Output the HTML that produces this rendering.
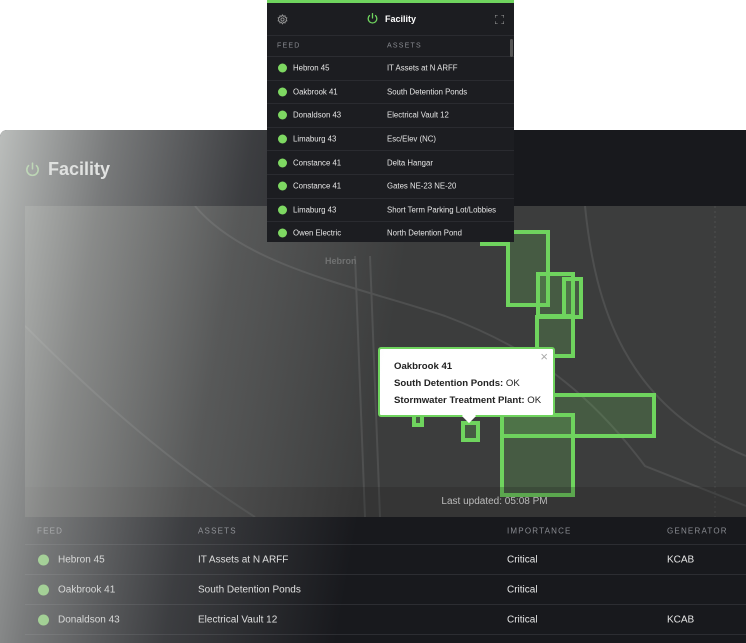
<!DOCTYPE html>
<html><head><meta charset="utf-8"><style>
*{box-sizing:border-box;margin:0;padding:0}
body{width:746px;height:643px;background:#fff;position:relative;overflow:hidden;font-family:"Liberation Sans",sans-serif}
.main{position:absolute;left:0;top:130px;width:746px;height:513px;background:#18191d;border-radius:7px 0 0 0;overflow:hidden}
.title{position:absolute;left:48px;top:29px;color:#fff;font-size:18px;font-weight:bold}
.map{position:absolute;left:25px;top:76px;width:721px;height:311px;background:#3c3d3d;overflow:hidden}
.z{position:absolute;border:4px solid #6fd45e;background:rgba(110,200,90,.22)}
.lu{position:absolute;left:0;bottom:0;width:100%;height:30px;background:rgba(30,30,32,.25);color:#bbb;font-size:10px;text-align:center;line-height:30px;padding-left:218px}
.tbl{position:absolute;left:25px;top:387px;width:721px}
.th{height:28px;border-bottom:1px solid #2c2d32;color:#8a8c92;font-size:8px;letter-spacing:1.2px;position:relative}
.tr{height:30px;border-bottom:1px solid #2c2d32;color:#e6e6e6;font-size:10px;position:relative}
.th span,.tr span{position:absolute;top:50%;transform:translateY(-50%)}
.dot{width:11px;height:11px;border-radius:50%;background:#7ed862;position:absolute;top:50%;transform:translateY(-50%)}
.ov{position:absolute;left:0;top:0;width:100%;height:100%;background:linear-gradient(100deg,rgba(215,218,215,.85) 0px,rgba(200,202,200,.55) 110px,rgba(170,172,172,.25) 250px,rgba(150,150,150,0) 420px);pointer-events:none}
.dd{position:absolute;left:267px;top:0;width:247px;height:242px;background:#1c1d21;border-top:3px solid #6fd45e;overflow:hidden}
.dd .hd{height:33px;border-bottom:1px solid #2a2b30;position:relative;color:#fff;font-size:9px;font-weight:bold}
.dd .th{height:21px;font-size:7px}
.dd .tr{height:23.6px;font-size:7.8px;border-bottom:1px solid #2a2b30}
.pop{position:absolute;width:177px;height:70px;background:#fff;border:2px solid #6fd45e;border-radius:3px;font-size:9.6px;color:#222;padding:9px 0 0 14px;line-height:17px;white-space:nowrap}
</style></head><body>
<div class="main">
 <svg style="position:absolute;left:24px;top:31px" width="17" height="17" viewBox="0 0 24 24" fill="none" stroke="#7ed862" stroke-width="2.2" stroke-linecap="round"><path d="M12 3v8"/><path d="M6.5 6.5a8 8 0 1 0 11 0"/></svg>
 <div class="title">Facility</div>
 <div class="map">
  <svg width="721" height="311" style="position:absolute;left:0;top:0" fill="none" stroke="#4e4f4f" stroke-width="2">
   <path d="M170 0 C220 60 330 80 420 110 C500 140 560 180 620 260 L721 300"/>
   <path d="M0 120 C80 200 150 260 230 311"/>
   <path d="M330 50 L340 311"/><path d="M345 50 L355 311"/>
   <path d="M560 0 C570 100 600 200 721 250"/>
   <path d="M690 0 L690 311" stroke-dasharray="2 3" stroke-width="1"/>
  </svg>
  <div style="position:absolute;left:300px;top:50px;color:#6a6b6b;font-size:9px;font-weight:bold">Hebron</div>
  <div class="z" style="left:455px;top:24px;width:26px;height:16px"></div>
  <div class="z" style="left:481px;top:24px;width:44px;height:77px"></div>
  <div class="z" style="left:511px;top:66px;width:39px;height:46px"></div>
  <div class="z" style="left:537px;top:71px;width:21px;height:42px"></div>
  <div class="z" style="left:510px;top:109px;width:40px;height:43px"></div>
  <div class="z" style="left:475px;top:187px;width:156px;height:45px"></div>
  <div class="z" style="left:475px;top:207px;width:75px;height:84px"></div>
  <div class="z" style="left:436px;top:215px;width:19px;height:21px"></div>
  <div class="z" style="left:387px;top:204px;width:12px;height:17px"></div>
  <div class="lu">Last updated: 05:08 PM</div>
 </div>
 <div class="pop" style="left:378px;top:217px">
  <b>Oakbrook 41</b><br><b>South Detention Ponds:</b> OK<br><b>Stormwater Treatment Plant:</b> OK
  <span style="position:absolute;right:5px;top:-1px;color:#aaa;font-size:13px">×</span>
  <div style="position:absolute;left:84px;bottom:-6px;width:10px;height:10px;background:#fff;transform:rotate(45deg)"></div>
 </div>
 <div class="tbl">
  <div class="th"><span style="left:12px">FEED</span><span style="left:173px">ASSETS</span><span style="left:482px">IMPORTANCE</span><span style="left:642px">GENERATOR</span></div>
  <div class="tr"><div class="dot" style="left:13px"></div><span style="left:33px">Hebron 45</span><span style="left:173px">IT Assets at N ARFF</span><span style="left:482px">Critical</span><span style="left:642px">KCAB</span></div>
  <div class="tr"><div class="dot" style="left:13px"></div><span style="left:33px">Oakbrook 41</span><span style="left:173px">South Detention Ponds</span><span style="left:482px">Critical</span></div>
  <div class="tr"><div class="dot" style="left:13px"></div><span style="left:33px">Donaldson 43</span><span style="left:173px">Electrical Vault 12</span><span style="left:482px">Critical</span><span style="left:642px">KCAB</span></div>
 </div>
 <div class="ov"></div>
</div>
<div class="dd">
 <div class="hd">
  <svg style="position:absolute;left:10px;top:11px" width="11" height="11" viewBox="0 0 24 24" fill="none" stroke="#999" stroke-width="2"><circle cx="12" cy="12" r="3.5"/><path d="M12 2l2 3 3.5-1 .5 3.5 3.5 1-1.5 3.5 1.5 3-3.5 1-.5 3.5-3.5-1-2 3-2-3-3.5 1-.5-3.5-3.5-1 1.5-3.5L2.5 8.5l3.5-1L6.5 4 10 5z"/></svg>
  <svg style="position:absolute;left:99px;top:9px" width="13" height="13" viewBox="0 0 24 24" fill="none" stroke="#6fd45e" stroke-width="2.4" stroke-linecap="round"><path d="M12 3v8"/><path d="M6.5 6.5a8 8 0 1 0 11 0"/></svg>
  <span style="position:absolute;left:118px;top:11px">Facility</span>
  <svg style="position:absolute;left:228px;top:12px" width="9" height="9" viewBox="0 0 10 10" fill="none" stroke="#999" stroke-width="1.2"><path d="M0 3V0h3M7 0h3v3M10 7v3H7M3 10H0V7"/></svg>
 </div>
 <div class="th"><span style="left:10px">FEED</span><span style="left:120px">ASSETS</span></div>
 <div class="tr"><div class="dot" style="left:11px;width:9px;height:9px"></div><span style="left:26px">Hebron 45</span><span style="left:120px">IT Assets at N ARFF</span></div>
 <div class="tr"><div class="dot" style="left:11px;width:9px;height:9px"></div><span style="left:26px">Oakbrook 41</span><span style="left:120px">South Detention Ponds</span></div>
 <div class="tr"><div class="dot" style="left:11px;width:9px;height:9px"></div><span style="left:26px">Donaldson 43</span><span style="left:120px">Electrical Vault 12</span></div>
 <div class="tr"><div class="dot" style="left:11px;width:9px;height:9px"></div><span style="left:26px">Limaburg 43</span><span style="left:120px">Esc/Elev (NC)</span></div>
 <div class="tr"><div class="dot" style="left:11px;width:9px;height:9px"></div><span style="left:26px">Constance 41</span><span style="left:120px">Delta Hangar</span></div>
 <div class="tr"><div class="dot" style="left:11px;width:9px;height:9px"></div><span style="left:26px">Constance 41</span><span style="left:120px">Gates NE-23 NE-20</span></div>
 <div class="tr"><div class="dot" style="left:11px;width:9px;height:9px"></div><span style="left:26px">Limaburg 43</span><span style="left:120px">Short Term Parking Lot/Lobbies</span></div>
 <div class="tr"><div class="dot" style="left:11px;width:9px;height:9px"></div><span style="left:26px">Owen Electric</span><span style="left:120px">North Detention Pond</span></div>
 <div style="position:absolute;right:1px;top:36px;width:3px;height:18px;background:#555;border-radius:2px"></div>
</div>
</body></html>
